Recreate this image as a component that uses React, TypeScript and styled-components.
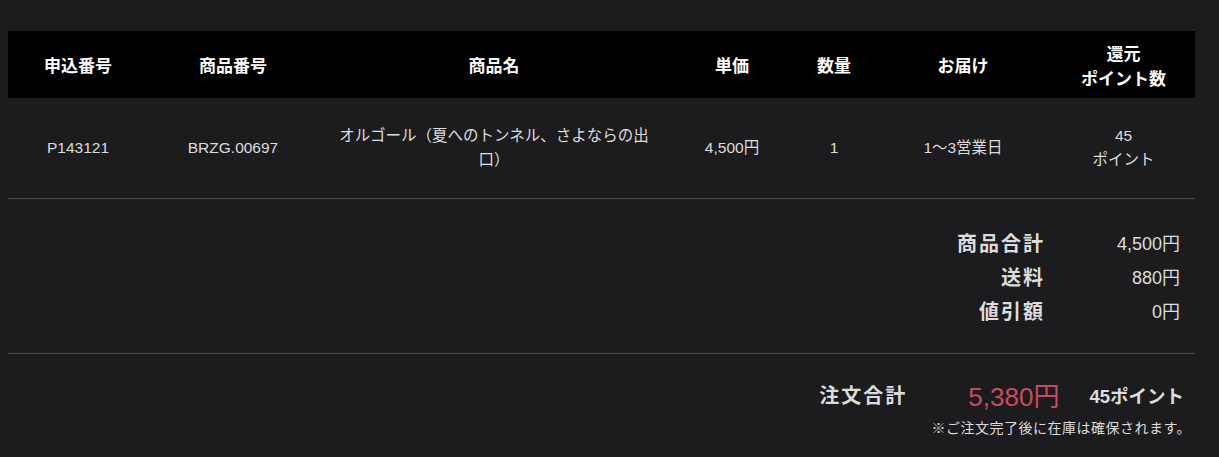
import { createGlobalStyle, styled } from 'styled-components';

const GlobalStyle = createGlobalStyle`
  html, body {
    margin: 0;
    background-color: #1c1c1e;
  }

  body {
    font-family: "Liberation Sans", "Noto Sans CJK JP", sans-serif;
    color: #dcdcdc;
  }
`;

const Page = styled.div`
  padding: 31px 24px 20px 8px;
`;

const Table = styled.table`
  width: 100%;
  border-collapse: collapse;
  table-layout: fixed;

  th {
    background-color: #000000;
    color: #ffffff;
    font-size: 17px;
    font-weight: 700;
    line-height: 25px;
    height: 63px;
    padding: 4px 4px 0;
    text-align: center;
  }

  td {
    height: 100px;
    padding: 0 18px;
    font-size: 15.5px;
    line-height: 24px;
    text-align: center;
    border-bottom: 1px solid #4a4a4c;
  }
`;

const Summary = styled.div`
  display: grid;
  grid-template-columns: 1fr 135px;
  row-gap: 8px;
  padding: 32px 15px 28px 0;
  border-bottom: 1px solid #4a4a4c;
  line-height: 26px;
`;

const SumLabel = styled.div`
  text-align: right;
  font-size: 20px;
  font-weight: 700;
  letter-spacing: 2px;
`;

const SumValue = styled.div`
  text-align: right;
  font-size: 18px;
`;

const Total = styled.div`
  display: flex;
  flex-direction: column;
  align-items: flex-end;
  padding: 22px 11px 0 0;
`;

const TotalRow = styled.div`
  display: flex;
  align-items: center;
`;

const TotalLabel = styled.span`
  font-size: 20px;
  font-weight: 700;
  letter-spacing: 2px;
  margin-right: 61px;
`;

const TotalPrice = styled.span`
  font-size: 26px;
  color: #c84b5c;
  margin-right: 30px;
`;

const TotalPoint = styled.span`
  font-size: 18.5px;
  font-weight: 700;
`;

const Note = styled.p`
  margin: 4px -7px 0 0;
  font-size: 14px;
  letter-spacing: 0.5px;
`;

const columns = [
  { label: '申込番号', width: 140 },
  { label: '商品番号', width: 170 },
  { label: '商品名', width: 352 },
  { label: '単価', width: 124 },
  { label: '数量', width: 80 },
  { label: 'お届け', width: 178 },
  { label: <>還元<br />ポイント数</>, width: 143 },
];

const App = () => {
  return (
    <Page>
      <GlobalStyle />
      <Table>
        <colgroup>
          {columns.map((c, i) => <col key={i} style={{ width: c.width }} />)}
        </colgroup>
        <thead>
          <tr>
            {columns.map((c, i) => <th key={i}>{c.label}</th>)}
          </tr>
        </thead>
        <tbody>
          <tr>
            <td>P143121</td>
            <td>BRZG.00697</td>
            <td>オルゴール（夏へのトンネル、さよならの出口）</td>
            <td>4,500円</td>
            <td>1</td>
            <td>1～3営業日</td>
            <td>45<br />ポイント</td>
          </tr>
        </tbody>
      </Table>
      <Summary>
        <SumLabel>商品合計</SumLabel>
        <SumValue>4,500円</SumValue>
        <SumLabel>送料</SumLabel>
        <SumValue>880円</SumValue>
        <SumLabel>値引額</SumLabel>
        <SumValue>0円</SumValue>
      </Summary>
      <Total>
        <TotalRow>
          <TotalLabel>注文合計</TotalLabel>
          <TotalPrice>5,380円</TotalPrice>
          <TotalPoint>45ポイント</TotalPoint>
        </TotalRow>
        <Note>※ご注文完了後に在庫は確保されます。</Note>
      </Total>
    </Page>
  );
}

export default App;
